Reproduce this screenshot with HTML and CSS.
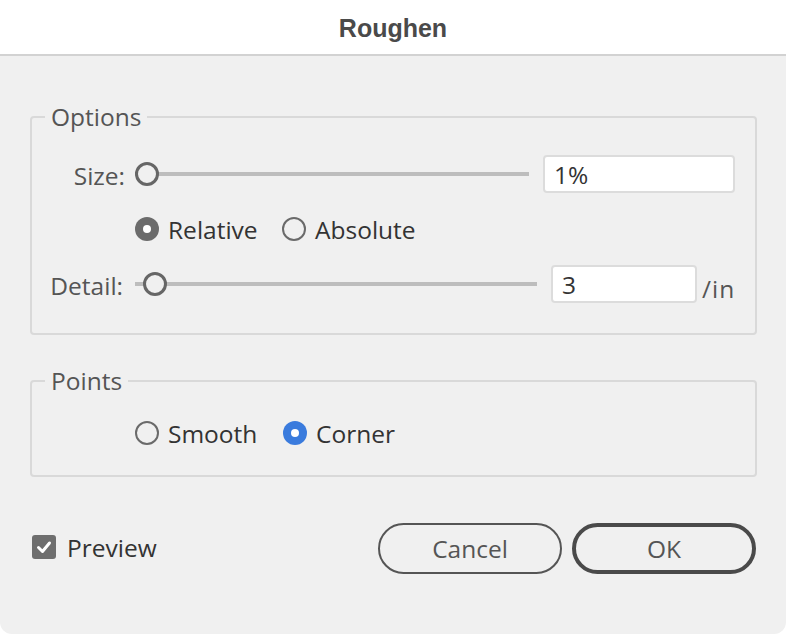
FILE: index.html
```html
<!DOCTYPE html>
<html lang="en">
<head>
<meta charset="utf-8">
<title>Roughen</title>
<link rel="stylesheet" href="styles.css">
</head>
<body>
<div class="dialog">
  <header class="titlebar"><h1 class="title">Roughen</h1></header>
  <main class="content">
    <fieldset class="group group-options">
      <legend class="legend">Options</legend>
      <div class="row row-size">
        <span class="row-label">Size:</span>
        <div class="slider">
          <div class="track"></div>
          <div class="thumb" style="left:0px"></div>
        </div>
        <div class="field field-size">1%</div>
      </div>
      <div class="radios radios-options">
        <label class="radio"><span class="radio-dot is-checked"></span><span class="radio-text">Relative</span></label>
        <label class="radio"><span class="radio-dot"></span><span class="radio-text">Absolute</span></label>
      </div>
      <div class="row row-detail">
        <span class="row-label">Detail:</span>
        <div class="slider">
          <div class="track"></div>
          <div class="thumb" style="left:8px"></div>
        </div>
        <div class="field field-detail">3</div>
        <span class="unit">/in</span>
      </div>
    </fieldset>
    <fieldset class="group group-points">
      <legend class="legend">Points</legend>
      <div class="radios radios-points">
        <label class="radio"><span class="radio-dot"></span><span class="radio-text">Smooth</span></label>
        <label class="radio"><span class="radio-dot is-checked is-accent"></span><span class="radio-text">Corner</span></label>
      </div>
    </fieldset>
  </main>
  <footer class="footer">
    <label class="checkbox">
      <span class="checkbox-box">
        <svg class="checkbox-mark" viewBox="0 0 24 24" width="24" height="24"><polyline points="6.5,12.5 10.5,16.5 17.5,8" fill="none" stroke="#ffffff" stroke-width="3" stroke-linecap="round" stroke-linejoin="round"/></svg>
      </span>
      <span class="checkbox-text">Preview</span>
    </label>
    <div class="buttons">
      <button class="btn btn-cancel" type="button">Cancel</button>
      <button class="btn btn-ok" type="button">OK</button>
    </div>
  </footer>
</div>
</body>
</html>
```
FILE: styles.css
```css
html, body {
  margin: 0;
  padding: 0;
  background: #ffffff;
}

body {
  font-family: "Open Sans", "Noto Sans", sans-serif;
  font-size: 24.5px;
  color: #3a3a3a;
}

.dialog {
  width: 786px;
  height: 634px;
  background: #f0f0f0;
  border-radius: 0 0 12px 12px;
  display: flex;
  flex-direction: column;
  overflow: hidden;
}

.titlebar {
  box-sizing: border-box;
  height: 56px;
  background: #ffffff;
  border-bottom: 2px solid #d2d2d2;
  display: flex;
  justify-content: center;
}

.title {
  margin: 0;
  padding-top: 2px;
  font-family: "Liberation Sans", Arial, sans-serif;
  font-weight: bold;
  font-size: 25px;
  line-height: 52px;
  color: #4a4a4a;
}

.content {
  padding: 45px 29px 0 30px;
  display: flex;
  flex-direction: column;
}

.group {
  margin: 0;
  border: 2px solid #d9d9d9;
  border-radius: 4px;
  padding: 22px 20px 30px 18px;
  min-width: 0;
}

.group-points {
  margin-top: 30px;
  padding-top: 23px;
  padding-bottom: 30px;
}

.legend {
  margin-left: -5px;
  padding: 0 6px;
  line-height: 32px;
  color: #555555;
}

.row {
  display: flex;
  align-items: center;
  height: 38px;
}

.row-label {
  width: 75px;
  text-align: right;
  color: #555555;
  flex: none;
  padding-top: 2px;
}

.row-detail .row-label {
  width: 73px;
  margin-right: 2px;
}

.slider {
  position: relative;
  flex: 1;
  height: 24px;
  margin-left: 10px;
  display: flex;
  align-items: center;
}

.track {
  flex: 1;
  height: 4px;
  background: #bdbdbd;
}

.thumb {
  position: absolute;
  top: 0;
  box-sizing: border-box;
  width: 24px;
  height: 24px;
  border-radius: 50%;
  border: 3.5px solid #666666;
  background: #f0f0f0;
}

.field {
  box-sizing: border-box;
  height: 38px;
  margin-left: 14px;
  background: #ffffff;
  border: 2px solid #dcdcdc;
  border-radius: 4px;
  padding-left: 9px;
  padding-top: 1px;
  line-height: 33px;
  color: #333333;
  flex: none;
}

.field-size {
  width: 192px;
}

.field-detail {
  width: 146px;
}

.unit {
  width: 33px;
  margin-left: 5px;
  margin-top: 8px;
  color: #555555;
  flex: none;
  letter-spacing: 1px;
}

.radios {
  display: grid;
  grid-template-columns: 147px auto;
  justify-content: start;
  margin-left: 85px;
  height: 25px;
  align-items: center;
}

.radios-options {
  margin-top: 23px;
  margin-bottom: 24px;
}

.radios-points {
  margin-left: 85px;
  grid-template-columns: 148px auto;
}

.radio {
  display: flex;
  align-items: center;
  gap: 9px;
  height: 25px;
}

.radio-dot {
  box-sizing: border-box;
  width: 24px;
  height: 24px;
  border-radius: 50%;
  border: 2px solid #6a6a6a;
  background: transparent;
  display: flex;
  align-items: center;
  justify-content: center;
  flex: none;
}

.radio-dot.is-checked {
  border: none;
  background: #6b6b6b;
}

.radio-dot.is-checked::after {
  content: "";
  width: 8px;
  height: 8px;
  border-radius: 50%;
  background: #ffffff;
}

.radio-dot.is-accent {
  background: #3a7bdd;
}

.radio-text {
  color: #333333;
  line-height: 23px;
  padding-top: 2px;
}

.footer {
  margin-top: 46px;
  padding: 0 30px 0 32px;
  display: flex;
  align-items: center;
  justify-content: space-between;
}

.checkbox {
  display: flex;
  align-items: center;
  gap: 11px;
  margin-bottom: 4px;
}

.checkbox-box {
  width: 24px;
  height: 24px;
  border-radius: 3px;
  background: #6e6e6e;
  display: flex;
}

.checkbox-text {
  color: #333333;
  padding-top: 2px;
}

.buttons {
  display: flex;
  gap: 10px;
}

.btn {
  box-sizing: border-box;
  width: 184px;
  height: 51px;
  border-radius: 26px;
  background: transparent;
  font-family: "Open Sans", "Noto Sans", sans-serif;
  font-size: 24.5px;
  color: #555555;
  padding: 0;
}

.btn-cancel {
  border: 2px solid #555555;
}

.btn-ok {
  border: 4px solid #4a4a4a;
}
```
